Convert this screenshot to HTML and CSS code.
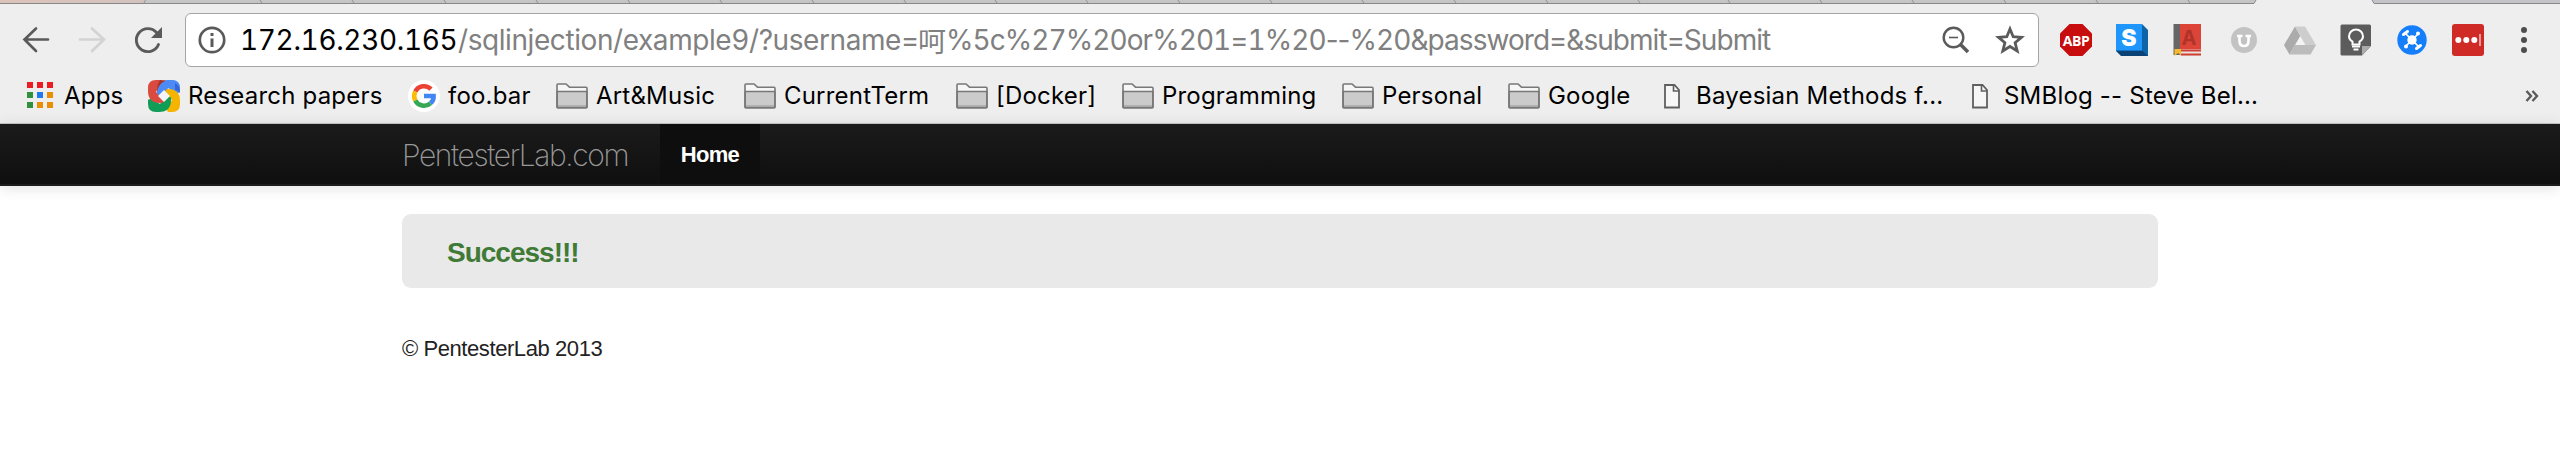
FILE: index.html
```
<!DOCTYPE html>
<html lang="en">
<head>
<meta charset="utf-8">
<title>PentesterLab.com</title>
<link rel="stylesheet" href="styles.css">
</head>
<body>
<svg class="defs" width="0" height="0">
  <symbol id="folder" viewBox="0 0 32 26">
    <path d="M1 24V2Q1 1 2 1H10L13.500 4.200H30Q31 4.200 31 5.200V24Q31 25 30 25H2Q1 25 1 24Z" fill="#f6f6f6" stroke="#787878" stroke-width="1.600"/>
    <path d="M1.200 8.500H30.800V24.300H1.200Z" fill="#cbcbcb" stroke="#787878" stroke-width="1.600"/>
    <path d="M2 22.700H30" stroke="#b2b2b2" stroke-width="1.600"/>
  </symbol>
  <symbol id="page" viewBox="0 0 32 26">
    <path d="M9 2H18.500L23 7V24.500H9Z" fill="#f6f6f6" stroke="#5f5f5f" stroke-width="1.800"/>
    <path d="M17.500 2V8H23" fill="none" stroke="#5f5f5f" stroke-width="1.600"/>
  </symbol>
</svg>
<header class="browser">
  <div class="tabs">
    <svg width="2560" height="4" viewBox="0 0 2560 4">
      <defs><linearGradient id="tint"><stop offset="0" stop-color="#dcc3ba"/><stop offset="1" stop-color="#d2c2be"/></linearGradient></defs>
      <path d="M0 0H2560V4H0Z" fill="#c5c5c5"/>
      <path d="M0 0H145V3H0Z" fill="url(#tint)"/>
      <path d="M2373 0H2560V3H2373Z" fill="#c3c3c8"/>
      <path d="M0 3.500H2560" stroke="#888"/>
      <path d="M145.500 0L144 3M260 0l2 3M352 0l2 3M444 0l2 3M536 0l2 3M628 0l2 3M720 0l2 3M812 0l2 3M904 0l2 3M995 0l2 3M1086 0l2 3M1178 0l2 3M1270 0l2 3M1362 0l2 3M1454 0l2 3M1546 0l2 3M1638 0l2 3M1728 0l2 3M1820 0l2 3M1912 0l2 3M2004 0l2 3M2096 0l2 3M2188 0l2 3" stroke="#929292" fill="none"/>
      <path d="M2256 0L2253 4H2375L2372 0Z" fill="#eee"/>
      <path d="M2256 0L2254 3.500H2250M2372 0L2374 3.500H2378" stroke="#888" fill="none"/>
    </svg>
  </div>
  <div class="toolbar">
    <div class="nav-buttons">
      <svg class="icon" viewBox="0 0 32 32"><path d="M16 4.500L4.500 15.500L16 27M4.500 15.500H28" fill="none" stroke="#5a5a5a" stroke-width="2.700" stroke-linecap="round"/></svg>
      <svg class="icon" viewBox="0 0 32 32"><path d="M16 4.500L28 15.500L16 27M28 15.500H4" fill="none" stroke="#d3d3d3" stroke-width="2.700" stroke-linecap="round"/></svg>
      <svg class="icon" viewBox="0 0 32 32"><path d="M26.500 20.500A11.500 11.500 0 1 1 24.500 8.500" fill="none" stroke="#5a5a5a" stroke-width="2.900" stroke-linecap="round"/><path d="M30 3V14H19Z" fill="#5a5a5a"/></svg>
    </div>
    <div class="omnibox">
      <svg class="info" viewBox="0 0 28 28"><circle cx="14" cy="14" r="12.200" fill="none" stroke="#5a5a5a" stroke-width="2.700"/><path d="M12.500 7h3v3h-3zM12.500 12.500h3V21h-3z" fill="#5a5a5a"/></svg>
      <div class="url"><span class="host">172.16.230.165</span><span class="path">/sqlinjection/example9/?username=</span><span class="han">呵</span><span class="query">%5c%27%20or%201=1%20<span class="dashes">--</span>%20&amp;password=&amp;submit=Submit</span></div>
      <svg class="mag" viewBox="0 0 28 28"><circle cx="11.500" cy="11.500" r="9.800" fill="none" stroke="#5a5a5a" stroke-width="2.400"/><path d="M7 11.500H16" stroke="#5a5a5a" stroke-width="1.600"/><path d="M18.500 18.500L26 26" stroke="#5a5a5a" stroke-width="3.600"/></svg>
      <svg class="star" viewBox="0 0 30 30"><path d="M15 4L18.200 11.700L26.500 12.300L20.100 17.700L22.200 26L15 21.500L7.800 26L9.900 17.700L3.500 12.300L11.800 11.700Z" fill="none" stroke="#5a5a5a" stroke-width="2.800"/></svg>
    </div>
    <div class="extensions">
      <svg class="icon" viewBox="0 0 32 32"><path d="M9.500 0H22.500L32 9.500V22.500L22.500 32H9.500L0 22.500V9.500Z" fill="#c70d0d"/><text class="abp" x="16" y="21.500" text-anchor="middle">ABP</text></svg>
      <svg class="icon" viewBox="0 0 32 32"><path d="M0 0H26L32 6V32H5L0 27Z" fill="#0f64a8"/><path d="M0 26.500H26L32 32H5.500Z" fill="#0b4275"/><path d="M0 0H26V26.500H0Z" fill="#1e96fc"/><text class="s-mark" x="13" y="22" text-anchor="middle">S</text></svg>
      <svg class="icon" viewBox="0 0 32 32"><path d="M1.500 0H8V31H1.500Z" fill="#666"/><path d="M8 0H29V25.500H8Z" fill="#db4437"/><path d="M8 25.500H29V32H8Z" fill="#e9e2e1"/><path d="M8 25.500H29V27.500H8ZM9 29.500H29V31.500H9Z" fill="#d23f31"/><path d="M2.500 25H9V31.500L6 29L2.500 32Z" fill="#f4b92c"/><text class="a-mark" x="17" y="21" text-anchor="middle">A</text></svg>
      <svg class="icon" viewBox="0 0 32 32"><circle cx="16" cy="16" r="13" fill="#c3c3c3"/><path d="M9 12H14.500M17.500 12H23M11.500 12V17Q11.500 22 16 22Q20.500 22 20.500 17V12" fill="none" stroke="#fff" stroke-width="2.600"/></svg>
      <svg class="icon" viewBox="0 0 32 32"><path d="M11 2.500L16.300 12L5.500 30.500L0 21Z" fill="#ababab"/><path d="M11 2.500H21L32 21H21.500Z" fill="#cdcdcd"/><path d="M11 21H32L26.500 30.500H5.500Z" fill="#bcbcbc"/><path d="M16 13L20.500 21H11.500Z" fill="#f4f4f4"/></svg>
      <svg class="icon" viewBox="0 0 32 32"><path d="M2 .5H29.500Q31 .5 31 2V22L22 31.500H2Q.5 31.500 .5 30V2Q.5 .5 2 .5Z" fill="#5c5c5c"/><path d="M31 22L22 31.500V22Z" fill="#aaa"/><path d="M12.500 20.500V17.500Q9 15.500 9 12.500A7 7 0 0 1 23 12.500Q23 15.500 19.500 17.500V20.500Z" fill="none" stroke="#fff" stroke-width="2"/><path d="M12 22.500H20M13.500 25.500H18.500" stroke="#fff" stroke-width="1.800"/></svg>
      <svg class="icon" viewBox="0 0 32 32"><circle cx="16" cy="16" r="14.700" fill="#157efb"/><g stroke="#fff" stroke-linecap="round"><path d="M9 9L23 23M22 10L10 22" stroke-width="1.700"/><path d="M7.500 10.500L11.500 7.500M20.500 24.500L24.500 21.500" stroke-width="3"/></g><circle cx="16" cy="16" r="4.700" fill="#fff"/><circle cx="22" cy="9.500" r="2" fill="#fff"/><circle cx="10" cy="22.500" r="2" fill="#fff"/></svg>
      <svg class="icon" viewBox="0 0 32 32"><rect width="32" height="32" rx="3" fill="#cf2a26"/><circle cx="6.300" cy="16" r="3" fill="#fff"/><circle cx="14.300" cy="16" r="3" fill="#fff"/><circle cx="22.300" cy="16" r="3" fill="#fff"/><path d="M28 10V22" stroke="#eda9a7" stroke-width="1.800"/></svg>
      <svg class="icon" viewBox="0 0 32 32"><g fill="#4d4d4d"><circle cx="16" cy="6" r="3"/><circle cx="16" cy="16" r="3"/><circle cx="16" cy="26" r="3"/></g></svg>
    </div>
  </div>
  <nav class="bookmarks">
    <a class="bookmark"><svg class="icon" viewBox="0 0 32 32"><path d="M3 2h6v6h-6zM13 2h6v6h-6zM23 2h6v6h-6z" fill="#ed1c24"/><path d="M3 12h6v6h-6zM3 22h6v6h-6z" fill="#31913f"/><path d="M13 12h6v6h-6z" fill="#2079ee"/><path d="M23 12h6v6h-6zM13 22h6v6h-6zM23 22h6v6h-6z" fill="#e98f06"/></svg>Apps</a>
    <a class="bookmark"><svg class="icon" viewBox="0 0 32 32">
      <g transform="rotate(0 16 16)"><path d="M9 12Q9 0 21 0H24Q32 0 32 8V12Q30 14 27 12L20 8L12 16Q8 15 9 12Z" fill="#4c8bf5"/></g>
      <g transform="rotate(90 16 16)"><path d="M9 12Q9 0 21 0H24Q32 0 32 8V12Q30 14 27 12L20 8L12 16Q8 15 9 12Z" fill="#f4b400"/></g>
      <g transform="rotate(180 16 16)"><path d="M9 12Q9 0 21 0H24Q32 0 32 8V12Q30 14 27 12L20 8L12 16Q8 15 9 12Z" fill="#109d58"/></g>
      <g transform="rotate(270 16 16)"><path d="M9 12Q9 0 21 0H24Q32 0 32 8V12Q30 14 27 12L20 8L12 16Q8 15 9 12Z" fill="#db4a3f"/></g>
      <path d="M9 12Q9 2 20 0H24Q27 0 28 3L20 8L13 15Q8 15 9 12Z" fill="#4c8bf5"/>
      <path d="M12 0Q15 0 18 .5Q10 4 9 12Q9 4 12 0Z" fill="#a93226"/>
      <path d="M27 3Q32 5 32 13Q31 11 27 10Z" fill="#3367d6"/>
      <path d="M16 10L22 16L16 22L10 16Z" fill="#f4f4f4"/></svg>Research papers</a>
    <a class="bookmark"><svg class="icon" viewBox="0 0 32 32"><circle cx="16" cy="16" r="16" fill="#fff"/><g fill="none" stroke-width="4.600"><path d="M7.300 11.500A9.800 9.800 0 0 1 23 9.200" stroke="#ea4335"/><path d="M7.300 20.500A9.800 9.800 0 0 1 7.300 11.500" stroke="#fbbc05"/><path d="M22.500 23.300A9.800 9.800 0 0 1 7.300 20.500" stroke="#34a853"/><path d="M16 16H25.600Q26 20.500 22.500 23.300" stroke="#4285f4"/></g></svg>foo.bar</a>
    <a class="bookmark"><svg class="icon"><use href="#folder"/></svg>Art&amp;Music</a>
    <a class="bookmark"><svg class="icon"><use href="#folder"/></svg>CurrentTerm</a>
    <a class="bookmark"><svg class="icon"><use href="#folder"/></svg>[Docker]</a>
    <a class="bookmark"><svg class="icon"><use href="#folder"/></svg>Programming</a>
    <a class="bookmark"><svg class="icon"><use href="#folder"/></svg>Personal</a>
    <a class="bookmark"><svg class="icon"><use href="#folder"/></svg>Google</a>
    <a class="bookmark"><svg class="icon"><use href="#page"/></svg>Bayesian Methods f...</a>
    <a class="bookmark"><svg class="icon"><use href="#page"/></svg>SMBlog -- Steve Bel...</a>
    <svg class="more" viewBox="0 0 14 12"><path d="M1.500 1L6 6L1.500 11M7.500 1L12 6L7.500 11" fill="none" stroke="#5a5a5a" stroke-width="2.400"/></svg>
  </nav>
</header>
<div class="navbar">
  <a class="brand">PentesterLab.com</a>
  <a class="nav-link">Home</a>
</div>
<main class="container">
  <div class="hero"><h4 class="success">Success!!!</h4></div>
  <footer class="footer">© PentesterLab 2013</footer>
</main>
</body>
</html>
```
FILE: styles.css
```
* { box-sizing: border-box; }
body { margin: 0; background: #fff; font-family: "Liberation Sans", Arial, sans-serif; }
svg { display: block; flex: none; }
.defs { position: absolute; }
.browser {
  height: 124px;
  background: #eee;
  border-bottom: 1px solid #c6c6c6;
  font-family: Inter, "Noto Sans CJK SC", sans-serif;
}
.tabs { height: 4px; }
.icon { width: 32px; height: 32px; overflow: visible; }
.toolbar { display: flex; align-items: center; height: 72px; padding-left: 20px; }
.nav-buttons { display: flex; gap: 24px; width: 165px; }
.omnibox {
  display: flex;
  align-items: center;
  width: 1854px;
  height: 54px;
  padding: 0 13px 0 12px;
  background: #fff;
  border: 1px solid #a5a5a5;
  border-radius: 6px;
}
.info { width: 28px; height: 28px; margin-right: 14px; }
.url {
  display: flex;
  align-items: center;
  flex: 1;
  color: #808080;
  font-size: 28px;
  line-height: 40px;
  white-space: pre;
  font-variant-numeric: tabular-nums;
}
.host { width: 218px; color: #000; letter-spacing: -.35px; }
.path { width: 460px; letter-spacing: -.42px; }
.han { width: 28px; font-family: "Noto Sans CJK SC", sans-serif; }
.query { letter-spacing: -.95px; }
.dashes { font-variant-numeric: normal; }
.mag { width: 28px; height: 28px; margin-right: 25px; }
.star { width: 30px; height: 30px; }
.extensions { display: flex; gap: 24px; margin-left: 21px; }
.abp { fill: #fff; font: bold 14px "Open Sans", sans-serif; letter-spacing: -.4px; }
.s-mark { fill: #fff; font: 900 23px Inter, sans-serif; }
.a-mark { fill: #b0332a; font: bold 20px Inter, sans-serif; }
.bookmarks {
  display: grid;
  grid-template-columns: 124px 260px 148px 188px 212px 166px 220px 166px 148px 308px 561px 14px;
  align-items: center;
  height: 39px;
  padding-left: 24px;
  font-size: 24px;
  letter-spacing: .2px;
}
.bookmark { display: flex; align-items: center; gap: 8px; color: #000; white-space: nowrap; }
.more { width: 14px; height: 12px; }
.navbar {
  display: flex;
  height: 62px;
  padding-left: 402px;
  background: linear-gradient(#1b1b1b, #0f0f0f);
  border-bottom: 2px solid #1d1b1d;
  box-shadow: 0 2px 14px rgba(0, 0, 0, .12);
}
.brand {
  width: 258px;
  color: #999;
  font: 200 30px/63px Inter, sans-serif;
  letter-spacing: -1.38px;
}
.nav-link {
  width: 100px;
  background: #0e0e0e;
  color: #fff;
  font-size: 22px;
  font-weight: bold;
  line-height: 61px;
  letter-spacing: -.7px;
  text-align: center;
}
.container { width: 1756px; margin: 28px 0 0 402px; }
.hero { height: 74px; padding: 21px 45px; background: #e9e9e9; border-radius: 9px; }
.success { margin: 0; color: #3f7a36; font-size: 28px; line-height: 36px; letter-spacing: -1px; }
.footer { margin-top: 46px; color: #222; font-size: 22px; line-height: 30px; letter-spacing: -.42px; }
```
